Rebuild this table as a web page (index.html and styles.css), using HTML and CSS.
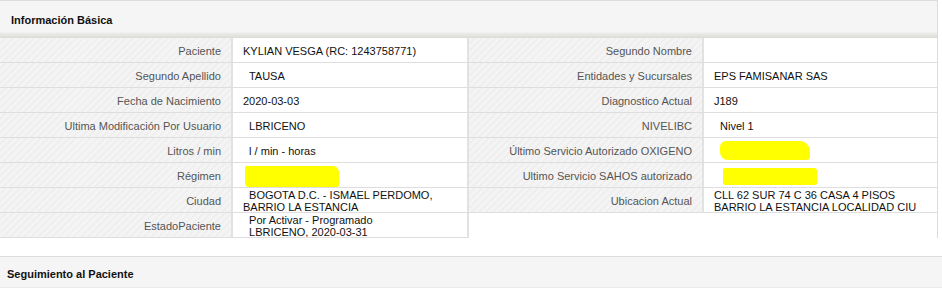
FILE: index.html
```html
<!DOCTYPE html>
<html lang="es">
<head>
<meta charset="utf-8">
<title>Información Básica</title>
<link rel="stylesheet" href="styles.css">
</head>
<body>
<section class="panel panel-info">
  <div class="panel-heading">Información Básica</div>
  <div class="info-grid">
    <div class="info-col">
      <div class="row"><div class="lbl">Paciente</div><div class="val">KYLIAN VESGA (RC: 1243758771)</div></div>
      <div class="row"><div class="lbl">Segundo Apellido</div><div class="val">&nbsp; TAUSA</div></div>
      <div class="row"><div class="lbl">Fecha de Nacimiento</div><div class="val">2020-03-03</div></div>
      <div class="row"><div class="lbl">Ultima Modificación Por Usuario</div><div class="val">&nbsp; LBRICENO</div></div>
      <div class="row"><div class="lbl">Litros / min</div><div class="val">&nbsp; l / min - horas</div></div>
      <div class="row"><div class="lbl">Régimen</div><div class="val"><span class="redact redact-a"></span></div></div>
      <div class="row"><div class="lbl">Ciudad</div><div class="val">&nbsp; BOGOTA D.C. - ISMAEL PERDOMO,<br>BARRIO LA ESTANCIA</div></div>
      <div class="row"><div class="lbl">EstadoPaciente</div><div class="val">&nbsp; Por Activar - Programado<br>&nbsp; LBRICENO, 2020-03-31</div></div>
    </div>
    <div class="info-col info-col-right">
      <div class="row"><div class="lbl">Segundo Nombre</div><div class="val"></div></div>
      <div class="row"><div class="lbl">Entidades y Sucursales</div><div class="val">EPS FAMISANAR SAS</div></div>
      <div class="row"><div class="lbl">Diagnostico Actual</div><div class="val">J189</div></div>
      <div class="row"><div class="lbl">NIVELIBC</div><div class="val">&nbsp; Nivel 1</div></div>
      <div class="row"><div class="lbl">Último Servicio Autorizado OXIGENO</div><div class="val"><span class="redact redact-b"></span></div></div>
      <div class="row"><div class="lbl">Ultimo Servicio SAHOS autorizado</div><div class="val"><span class="redact redact-c"></span></div></div>
      <div class="row"><div class="lbl">Ubicacion Actual</div><div class="val">CLL 62 SUR 74 C 36 CASA 4 PISOS<br>BARRIO LA ESTANCIA LOCALIDAD CIU</div></div>
    </div>
  </div>
</section>
<section class="panel panel-follow">
  <div class="panel-heading">Seguimiento al Paciente</div>
</section>
</body>
</html>
```

FILE: styles.css
```css
html, body {
  margin: 0;
  padding: 0;
  background: #fff;
}

body {
  font-family: "Liberation Sans", Arial, sans-serif;
  font-size: 11px;
  color: #222;
}

.panel-info {
  width: 937px;
  border-top: 1px solid #dcdcdc;
  border-right: 1px solid #dcdcdc;
}

.panel-info .panel-heading {
  height: 37px;
  box-sizing: border-box;
  padding: 13px 11px 0;
  font-weight: bold;
  font-size: 11px;
  line-height: 13px;
  color: #111;
  background: linear-gradient(to bottom, #f5f5f5 0, #f5f5f5 31px, #ecece8 32px, #dcdcd7 37px);
}

.info-grid {
  display: flex;
  align-items: flex-start;
}

.info-col {
  width: 469px;
}

.info-col-right {
  width: 468px;
}

.row {
  display: grid;
  grid-template-columns: 233px 1fr;
  height: 25px;
  box-sizing: border-box;
  border-bottom: 1px solid #dedede;
}

.info-col:first-child .row {
  grid-template-columns: 233px 236px;
}

.info-col-right .row {
  grid-template-columns: 235px 1fr;
}

.lbl {
  display: flex;
  align-items: center;
  justify-content: flex-end;
  padding: 2px 10px 0 0;
  color: #555;
  background: repeating-linear-gradient(135deg, #f4f4f4 0, #f4f4f4 3px, #efefef 3px, #efefef 5px);
  border-right: 2px solid #e2e2e2;
  white-space: nowrap;
  overflow: hidden;
}

.val {
  display: flex;
  flex-direction: column;
  justify-content: center;
  padding: 2px 0 0 10px;
  color: #111;
  line-height: 12.5px;
  white-space: nowrap;
  overflow: hidden;
}

.info-col:first-child .val {
  border-right: 2px solid #e2e2e2;
}

.redact {
  display: block;
  background: #ffff00;
}

.redact-a {
  width: 94px;
  height: 21px;
  margin-left: 2px;
  border-radius: 1px 6px 2px 4px;
}

.redact-b {
  width: 90px;
  height: 19px;
  margin-left: 6px;
  margin-bottom: 2px;
  border-radius: 6px 10px 4px 8px;
}

.redact-c {
  width: 94px;
  height: 17px;
  margin-left: 9px;
  margin-top: 1px;
  border-radius: 2px 3px 2px 2px;
}

.panel-follow {
  margin-top: 18px;
  border-top: 1px solid #dcdcdc;
  border-bottom: 1px solid #ececec;
  background: #f5f5f5;
}

.panel-follow .panel-heading {
  height: 30px;
  box-sizing: border-box;
  padding: 11px 7px 0;
  font-weight: bold;
  line-height: 13px;
  color: #111;
}
```
